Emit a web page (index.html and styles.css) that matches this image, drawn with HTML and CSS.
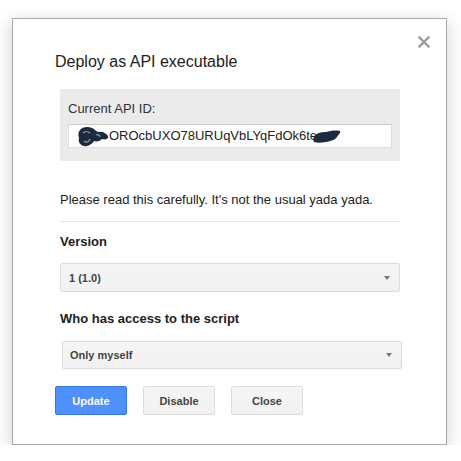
FILE: index.html
```html
<!DOCTYPE html>
<html>
<head>
<meta charset="utf-8">
<link rel="stylesheet" href="styles.css">
</head>
<body>
<div class="dialog">
  <button class="close-x" aria-label="Close">
    <svg width="12" height="12" viewBox="0 0 12 12"><path d="M1.5 1.5 L10.5 10.5 M10.5 1.5 L1.5 10.5" stroke="#9a9a9a" stroke-width="2.4" stroke-linecap="square"/></svg>
  </button>
  <h1 class="title">Deploy as API executable</h1>
  <div class="id-box">
    <div class="id-label">Current API ID:</div>
    <div class="id-field">
      <svg class="blot blot-left" width="31" height="21" viewBox="0 0 31 21"><path d="M2 4 C4 1 10 0 14 2 C17 3 18 6 21 6 C24 5 28 7 30 10 C31 13 27 14 24 13 C22 15 19 16 16 15 C14 18 10 21 6 20 C2 19 0 16 1 12 C0 9 0 6 2 4 Z" fill="#1b2b3d"/><path d="M5 7 C7 5 10 5 12 7 M6 15 C8 17 11 16 12 13 M18 9 C20 8 22 9 22 11" stroke="#8a99ab" stroke-width="1.2" fill="none"/></svg><span class="id-text">OROcbUXO78URUqVbLYqFdOk6te</span><svg class="blot blot-right" width="28" height="15" viewBox="0 0 28 15"><path d="M1 8 C3 4 8 3 13 3 C17 2 22 1 27 2 C28 4 25 6 24 8 C22 11 18 12 13 13 C8 14 4 14 1 13 C0 11 0 10 1 8 Z" fill="#1b2b3d"/></svg>
    </div>
  </div>
  <p class="notice">Please read this carefully. It's not the usual yada yada.</p>
  <div class="rule"></div>
  <div class="field-label">Version</div>
  <div class="select select-version"><span>1 (1.0)</span><span class="caret"></span></div>
  <div class="field-label field-label-access">Who has access to the script</div>
  <div class="select select-access"><span>Only myself</span><span class="caret"></span></div>
  <div class="actions">
    <button class="btn btn-primary">Update</button>
    <button class="btn">Disable</button>
    <button class="btn">Close</button>
  </div>
</div>
</body>
</html>
```

FILE: styles.css
```css
html, body {
  margin: 0;
  padding: 0;
  background: #ffffff;
}

body {
  font-family: "Liberation Sans", Arial, sans-serif;
  color: #222222;
}

.dialog {
  position: relative;
  box-sizing: border-box;
  width: 435px;
  height: 427px;
  margin: 18px 0 0 12px;
  padding: 34px 46px 0 42px;
  background: #ffffff;
  border: 1px solid rgba(0, 0, 0, 0.333);
  box-shadow: 0 4px 16px rgba(0, 0, 0, 0.2);
}

.close-x {
  position: absolute;
  top: 17px;
  right: 16px;
  width: 12px;
  height: 12px;
  padding: 0;
  border: 0;
  background: none;
  display: flex;
}

.title {
  margin: 0;
  font-size: 16px;
  line-height: 18px;
  font-weight: normal;
  color: #222222;
}

.id-box {
  margin: 18px 0 0 5px;
  padding: 12px 8px 13px 8px;
  background: #ebebeb;
}

.id-label {
  font-size: 13px;
  line-height: 15px;
  color: #333333;
}

.id-field {
  margin-top: 8px;
  height: 22px;
  box-sizing: content-box;
  background: #ffffff;
  border: 1px solid #dddddd;
  border-top-color: #cccccc;
  padding-left: 9px;
  display: flex;
  align-items: center;
  font-size: 13px;
  line-height: 22px;
  color: #222222;
}

.blot {
  display: block;
  flex: none;
}

.blot-left {
  margin-right: 0;
  margin-top: 1px;
}

.blot-right {
  margin-left: -4px;
  margin-top: 1px;
}

.notice {
  margin: 31px 0 0 5px;
  font-size: 13px;
  line-height: 15px;
  color: #222222;
}

.rule {
  margin: 14px 0 0 5px;
  border-top: 1px solid #e5e5e5;
}

.field-label {
  margin: 12px 0 0 5px;
  font-size: 13px;
  line-height: 15px;
  font-weight: bold;
  color: #222222;
}

.field-label-access {
  margin-top: 19px;
}

.select {
  box-sizing: border-box;
  display: flex;
  align-items: center;
  justify-content: space-between;
  margin: 14px 0 0 5px;
  height: 29px;
  padding: 0 9px 0 8px;
  background: linear-gradient(#f5f5f5, #f1f1f1);
  border: 1px solid #dcdcdc;
  border-radius: 2px;
  font-size: 11px;
  font-weight: bold;
  color: #444444;
}

.select-access {
  margin: 15px -2px 0 7px;
  height: 28px;
  padding-left: 7px;
}

.caret {
  width: 0;
  height: 0;
  border-left: 3.5px solid transparent;
  border-right: 3.5px solid transparent;
  border-top: 4px solid #777777;
}

.actions {
  display: flex;
  gap: 16px;
  margin-top: 17px;
}

.btn {
  box-sizing: border-box;
  width: 72px;
  height: 29px;
  padding: 0;
  border: 1px solid #dcdcdc;
  border-radius: 2px;
  background: linear-gradient(#f5f5f5, #f1f1f1);
  font-family: "Liberation Sans", Arial, sans-serif;
  font-size: 11px;
  font-weight: bold;
  color: #444444;
}

.btn-primary {
  background: #4d90fe;
  border-color: #3079ed;
  color: #ffffff;
}
```
